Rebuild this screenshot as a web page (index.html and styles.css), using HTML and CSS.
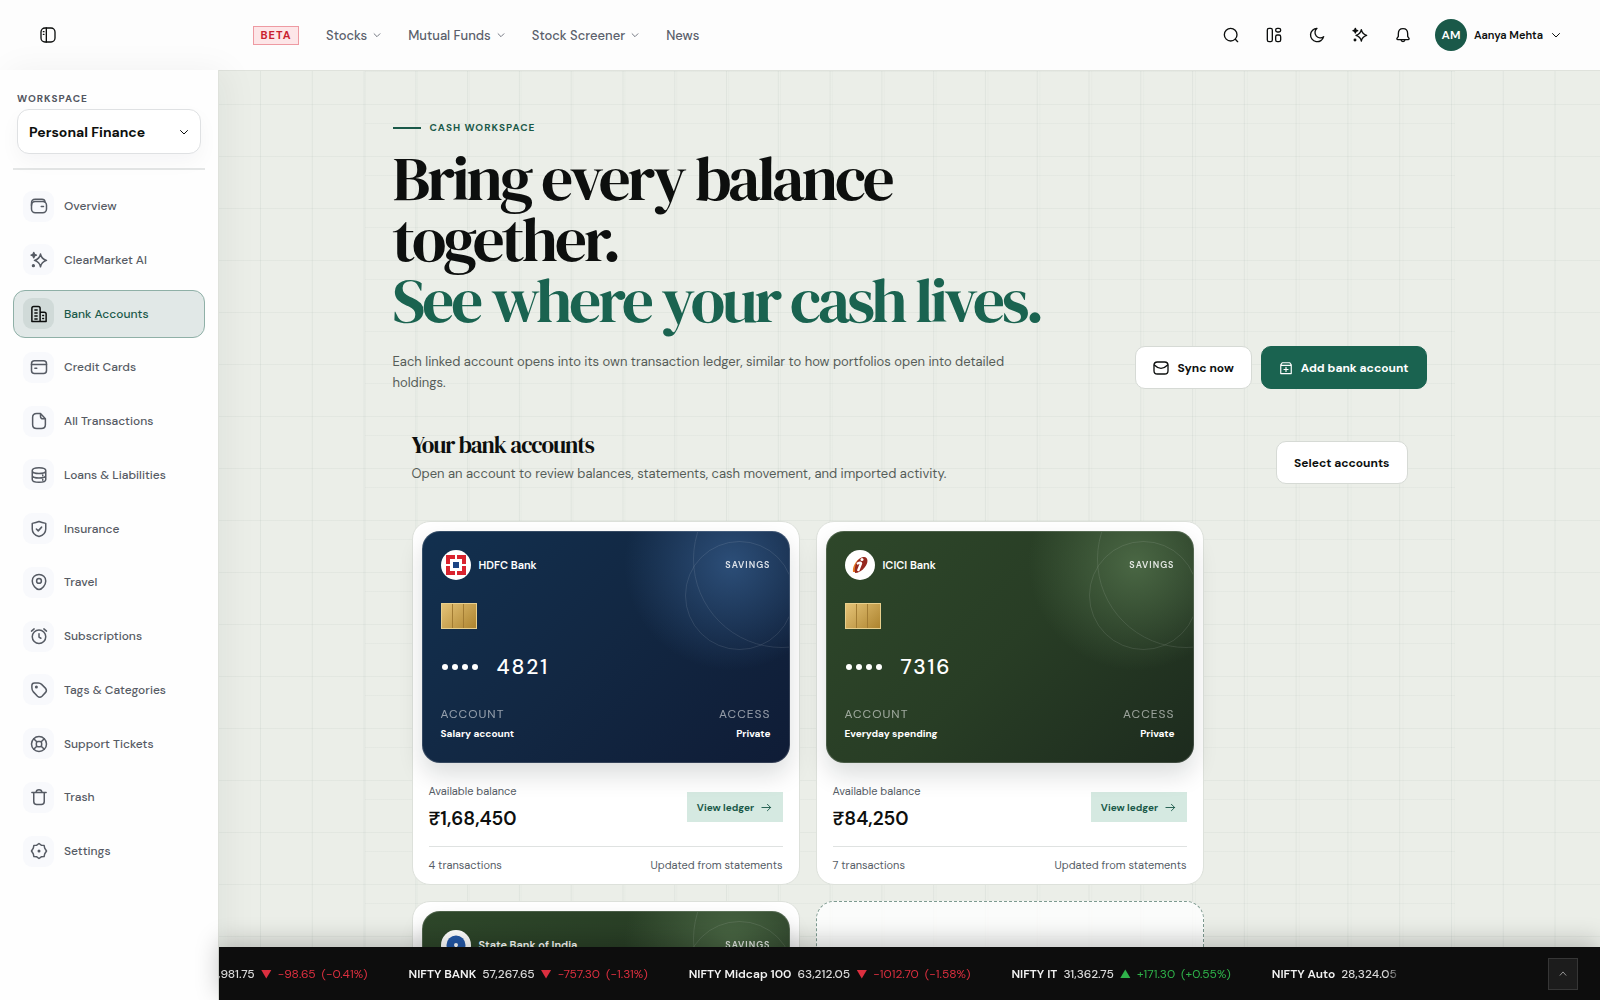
FILE: index.html
```html
<!DOCTYPE html>
<html lang="en">
<head>
    <meta charset="UTF-8">
    <meta name="viewport" content="width=device-width, initial-scale=1.0">
    <title>Bank Accounts - ClearMarket</title>
    <link rel="stylesheet" href="styles.css">
</head>
<body>

    <!-- Icon sprite -->
    <svg class="sprite" aria-hidden="true">
        <symbol id="i-panel" viewBox="0 0 24 24"><rect x="1.500" y="1.500" width="21" height="21" rx="6"/><path d="M9.500 1.500v21M5 7h1M5 11h1"/></symbol>
        <symbol id="i-down" viewBox="0 0 24 24"><path d="M5 9l7 7 7-7"/></symbol>
        <symbol id="i-up" viewBox="0 0 24 24"><path d="M5 15l7-8 7 8"/></symbol>
        <symbol id="i-search" viewBox="0 0 24 24"><circle cx="11.5" cy="11.5" r="9.500"/><path d="M18.5 18.5L22 22"/></symbol>
        <symbol id="i-board" viewBox="0 0 24 24"><rect x="2" y="2" width="7.500" height="20" rx="2.500"/><rect x="14.500" y="2" width="7.500" height="5.500" rx="2.500"/><rect x="14.500" y="12" width="7.500" height="10" rx="2.500"/></symbol>
        <symbol id="i-moon" viewBox="0 0 24 24"><path d="M12 2A10 10 0 1 0 22 14.500a7.500 7.500 0 0 1-10-12.500z"/></symbol>
        <symbol id="i-spark" viewBox="0 0 24 24"><path d="M14 4c1 5 3 7 8 8.500-5 1.500-7 3.500-8 8.500-1-5-3-7-8-8.500 5-1.500 7-3.500 8-8.500z"/><path class="solid" d="M5 2l1 2.500L8.500 5.500 6 6.500 5 9 4 6.500 1.500 5.500 4 4.500z"/><circle class="solid" cx="4.500" cy="19.500" r="1.200"/></symbol>
        <symbol id="i-bell" viewBox="0 0 24 24"><path d="M12 2.500c-4.500 0-7 3-7 7.500v4l-2 3c-.5 1 0 2 1.200 2h15.600c1.200 0 1.700-1 1.200-2l-2-3v-4c0-4.500-2.500-7.500-7-7.500zM9 19.500c.5 3 5.500 3 6 0"/></symbol>
        <symbol id="i-wallet" viewBox="0 0 24 24"><rect x="2" y="6" width="20" height="15" rx="5"/><path d="M2 11V8c0-3 2-5 5-5h9c2.500 0 3.800 1.500 4 3.500M15 12.500h3"/></symbol>
        <symbol id="i-building" viewBox="0 0 24 24"><path d="M2.500 22V4.500c0-1.500.8-2.500 2.500-2.500h6c1.700 0 2.500 1 2.500 2.500V22M13.500 9.500H19c1.700 0 2.500 1 2.500 2.500v10h-19M6.500 6.500h3M6.500 10.500h3M6.500 14.500h3M6.500 18.500h3M17 14h1M17 18h1"/></symbol>
        <symbol id="i-card" viewBox="0 0 24 24"><rect x="2" y="3.500" width="20" height="17" rx="4"/><path d="M2 8.500h20M6.500 13.500H9"/></symbol>
        <symbol id="i-file" viewBox="0 0 24 24"><path d="M14 2H9C5.500 2 3.500 4 3.500 7v10c0 3 2 5 5.500 5h6c3.500 0 5.500-2 5.500-5V9zM14 2v3.500C14 8 15.500 9 17.500 9h3"/></symbol>
        <symbol id="i-data" viewBox="0 0 24 24"><path d="M3 6c0-5 18-5 18 0v12c0 5-18 5-18 0zM3 7c1 4 17 4 18 0M3 13c1 4 17 4 18 0M17 12v1M17 18v1"/></symbol>
        <symbol id="i-shield" viewBox="0 0 24 24"><path d="M12 2c3.500 1.500 6 2 9 2.500V12c0 5-4 8.500-9 10-5-1.500-9-5-9-10V4.500C6 4 8.500 3.500 12 2zM8.500 12l2.500 2.500 4.500-5"/></symbol>
        <symbol id="i-pin" viewBox="0 0 24 24"><path d="M12 2c-5 0-9 3.500-9 8.500C3 16 8 22 12 22s9-6 9-11.500C21 5.500 17 2 12 2z"/><circle cx="12" cy="10.500" r="3.200"/></symbol>
        <symbol id="i-alarm" viewBox="0 0 24 24"><circle cx="12" cy="13" r="9"/><path d="M12 9v4.500l2.500 1.500M2 5.500L5.500 2.500M22 5.500l-3.500-3"/></symbol>
        <symbol id="i-tag" viewBox="0 0 24 24"><path d="M2.500 9V6c0-2.500 1-3.500 3.500-3.500h5c2 0 3 .5 4.500 2l5 5c1.800 2 1.800 4 0 6l-4.500 4.800c-2 1.900-4 1.900-6 0L4.500 14.500c-1.500-1.500-2-3-2-5.500z"/><circle class="solid" cx="8.500" cy="8" r="1"/></symbol>
        <symbol id="i-buoy" viewBox="0 0 24 24"><circle cx="12" cy="12" r="10"/><rect x="8.500" y="8.500" width="7" height="7" rx="2"/><path d="M5 5l4 4M19 5l-4 4M5 19l4-4M19 19l-4-4"/></symbol>
        <symbol id="i-trash" viewBox="0 0 24 24"><path d="M2.500 6h19M5 6v12c0 2.500 1.500 4 4 4h6c2.500 0 4-1.500 4-4V6M8 6c.5-5 7.500-5 8 0"/></symbol>
        <symbol id="i-gear" viewBox="0 0 24 24"><path d="M12 2l3 2.200 3.800.3.800 3.700L22 12l-2.400 3.800-.8 3.700-3.800.3L12 22l-3-2.200-3.800-.3-.8-3.700L2 12l2.400-3.800.8-3.700L9 4.200z"/><circle class="solid" cx="12" cy="12" r="1"/></symbol>
        <symbol id="i-mail" viewBox="0 0 24 24"><rect x="1.500" y="3" width="21" height="18" rx="5"/><path d="M2 7.500c3 3 6.500 5 10 5s7-2 10-5"/></symbol>
        <symbol id="i-add" viewBox="0 0 24 24"><path d="M3 21.500V6.500L5.500 3h13L21 6.500v15zM3 7.500h18M12 11v7M8.500 14.500h7"/></symbol>
        <symbol id="i-right" viewBox="0 0 24 24"><path d="M2 12h19M14 5l7 7-7 7"/></symbol>
    </svg>

    <div class="app">
        <!-- Top bar -->
        <header class="topbar">
            <div class="topbar-left">
                <button class="icon-button" aria-label="Toggle sidebar"><svg class="icon"><use href="#i-panel"/></svg></button>
            </div>
            <span class="beta">BETA</span>
            <nav class="topnav" aria-label="Markets">
                <a href="#">Stocks <svg class="icon caret"><use href="#i-down"/></svg></a>
                <a href="#">Mutual Funds <svg class="icon caret"><use href="#i-down"/></svg></a>
                <a href="#">Stock Screener <svg class="icon caret"><use href="#i-down"/></svg></a>
                <a href="#">News</a>
            </nav>
            <div class="tools">
                <button class="icon-button" aria-label="Search"><svg class="icon"><use href="#i-search"/></svg></button>
                <button class="icon-button" aria-label="Dashboard"><svg class="icon"><use href="#i-board"/></svg></button>
                <button class="icon-button" aria-label="Dark mode"><svg class="icon"><use href="#i-moon"/></svg></button>
                <button class="icon-button" aria-label="Assistant"><svg class="icon"><use href="#i-spark"/></svg></button>
                <button class="icon-button" aria-label="Notifications"><svg class="icon"><use href="#i-bell"/></svg></button>
            </div>
            <button class="profile">
                <span class="avatar">AM</span>
                <span>Aanya Mehta</span>
                <svg class="icon caret"><use href="#i-down"/></svg>
            </button>
        </header>

        <!-- Sidebar -->
        <aside class="sidebar">
            <div class="workspace">
                <label for="workspace">WORKSPACE</label>
                <div class="select-box">
                    <select id="workspace"><option>Personal Finance</option></select>
                    <svg class="icon"><use href="#i-down"/></svg>
                </div>
            </div>
            <nav class="sidenav" aria-label="Workspace">
                <a href="#"><span class="tile"><svg class="icon"><use href="#i-wallet"/></svg></span>Overview</a>
                <a href="#"><span class="tile"><svg class="icon"><use href="#i-spark"/></svg></span>ClearMarket AI</a>
                <a href="#" class="active" aria-current="page"><span class="tile"><svg class="icon"><use href="#i-building"/></svg></span>Bank Accounts</a>
                <a href="#"><span class="tile"><svg class="icon"><use href="#i-card"/></svg></span>Credit Cards</a>
                <a href="#"><span class="tile"><svg class="icon"><use href="#i-file"/></svg></span>All Transactions</a>
                <a href="#"><span class="tile"><svg class="icon"><use href="#i-data"/></svg></span>Loans &amp; Liabilities</a>
                <a href="#"><span class="tile"><svg class="icon"><use href="#i-shield"/></svg></span>Insurance</a>
                <a href="#"><span class="tile"><svg class="icon"><use href="#i-pin"/></svg></span>Travel</a>
                <a href="#"><span class="tile"><svg class="icon"><use href="#i-alarm"/></svg></span>Subscriptions</a>
                <a href="#"><span class="tile"><svg class="icon"><use href="#i-tag"/></svg></span>Tags &amp; Categories</a>
                <a href="#"><span class="tile"><svg class="icon"><use href="#i-buoy"/></svg></span>Support Tickets</a>
                <a href="#"><span class="tile"><svg class="icon"><use href="#i-trash"/></svg></span>Trash</a>
                <a href="#"><span class="tile"><svg class="icon"><use href="#i-gear"/></svg></span>Settings</a>
            </nav>
        </aside>

        <div class="content">
            <main class="scroll">
                <div class="page">
                    <section class="hero">
                        <p class="eyebrow">CASH WORKSPACE</p>
                        <h1>Bring every balance<br>together.<br><span>See where your cash lives.</span></h1>
                        <div class="hero-row">
                            <p class="lead">Each linked account opens into its own transaction ledger, similar to how portfolios open into detailed holdings.</p>
                            <div class="actions">
                                <button class="button"><svg class="icon"><use href="#i-mail"/></svg>Sync now</button>
                                <button class="button primary"><svg class="icon"><use href="#i-add"/></svg>Add bank account</button>
                            </div>
                        </div>
                    </section>

                    <section class="accounts">
                        <div class="accounts-head">
                            <div>
                                <h2>Your bank accounts</h2>
                                <p>Open an account to review balances, statements, cash movement, and imported activity.</p>
                            </div>
                            <button class="button">Select accounts</button>
                        </div>

                        <div class="cards">
                            <article class="account">
                                <div class="bank-card navy">
                                    <div class="card-top">
                                        <svg class="bank-logo" viewBox="0 0 30 30">
                                            <circle cx="15" cy="15" r="15" fill="#fff"/>
                                            <path fill="#d9232e" d="M5 5h20v20H5z"/>
                                            <path fill="#fff" d="M9 9h12v12H9zM14 5h2v20h-2zM5 14h20v2H5z"/>
                                            <path fill="#1c4483" d="M12 12h6v6h-6z"/>
                                        </svg>
                                        <strong>HDFC Bank</strong>
                                        <span class="kind">SAVINGS</span>
                                    </div>
                                    <div class="chip"></div>
                                    <div class="number"><span class="dots"><i></i><i></i><i></i><i></i></span>4821</div>
                                    <dl class="card-info">
                                        <div><dt>ACCOUNT</dt><dd>Salary account</dd></div>
                                        <div><dt>ACCESS</dt><dd>Private</dd></div>
                                    </dl>
                                </div>
                                <div class="balance">
                                    <div>
                                        <p>Available balance</p>
                                        <strong>₹1,68,450</strong>
                                    </div>
                                    <button class="ledger">View ledger <svg class="icon"><use href="#i-right"/></svg></button>
                                </div>
                                <div class="meta"><span>4 transactions</span><span>Updated from statements</span></div>
                            </article>

                            <article class="account">
                                <div class="bank-card green">
                                    <div class="card-top">
                                        <svg class="bank-logo" viewBox="0 0 30 30">
                                            <circle cx="15" cy="15" r="15" fill="#fff"/>
                                            <path fill="#e87822" d="M8 22c-1-5 3-12 8-14l-5 14z"/>
                                            <path fill="#96281f" d="M10 23C9 16 12 8 18 7c5-1 6 5 2 10-3 4-7 6-10 6z"/>
                                            <circle cx="17" cy="9.500" r="1.500" fill="#fff"/>
                                            <path stroke="#fff" stroke-width="2.400" fill="none" d="M12 14c2-1.500 4-2 4-.5L13 21"/>
                                        </svg>
                                        <strong>ICICI Bank</strong>
                                        <span class="kind">SAVINGS</span>
                                    </div>
                                    <div class="chip"></div>
                                    <div class="number"><span class="dots"><i></i><i></i><i></i><i></i></span>7316</div>
                                    <dl class="card-info">
                                        <div><dt>ACCOUNT</dt><dd>Everyday spending</dd></div>
                                        <div><dt>ACCESS</dt><dd>Private</dd></div>
                                    </dl>
                                </div>
                                <div class="balance">
                                    <div>
                                        <p>Available balance</p>
                                        <strong>₹84,250</strong>
                                    </div>
                                    <button class="ledger">View ledger <svg class="icon"><use href="#i-right"/></svg></button>
                                </div>
                                <div class="meta"><span>7 transactions</span><span>Updated from statements</span></div>
                            </article>

                            <article class="account">
                                <div class="bank-card green">
                                    <div class="card-top">
                                        <svg class="bank-logo" viewBox="0 0 30 30">
                                            <circle cx="15" cy="15" r="15" fill="#fff"/>
                                            <circle cx="15" cy="15" r="9.500" fill="#2459a9"/>
                                            <circle cx="15" cy="15" r="2" fill="#fff"/>
                                            <path fill="#fff" d="M14 15h2v10h-2z"/>
                                        </svg>
                                        <strong>State Bank of India</strong>
                                        <span class="kind">SAVINGS</span>
                                    </div>
                                </div>
                            </article>

                            <div class="account add-slot"></div>
                        </div>
                    </section>
                </div>
            </main>

            <!-- Market ticker -->
            <footer class="ticker">
                <div class="ticker-window">
                    <div class="ticker-track">
                        <div class="quote down"><span>23,981.75</span><i>▼</i><em>-98.65</em><em>(-0.41%)</em></div>
                        <div class="quote down"><b>NIFTY BANK</b><span>57,267.65</span><i>▼</i><em>-757.30</em><em>(-1.31%)</em></div>
                        <div class="quote down"><b>NIFTY Midcap 100</b><span>63,212.05</span><i>▼</i><em>-1012.70</em><em>(-1.58%)</em></div>
                        <div class="quote up"><b>NIFTY IT</b><span>31,362.75</span><i>▲</i><em>+171.30</em><em>(+0.55%)</em></div>
                        <div class="quote"><b>NIFTY Auto</b><span>28,324.05</span></div>
                    </div>
                </div>
                <button class="ticker-toggle" aria-label="Expand ticker"><svg class="icon"><use href="#i-up"/></svg></button>
            </footer>
        </div>
    </div>

</body>
</html>
```
FILE: styles.css
```css
* {
    box-sizing: border-box;
}
body {
    margin: 0;
    background-color: #ebeee8;
    color: #0d0f0e;
    font-family: "DM Sans", Inter, "Liberation Sans", sans-serif;
    font-size: 13px;
}
h1, h2, p, dl, dd {
    margin: 0;
}
a {
    color: inherit;
    text-decoration: none;
}
button, select {
    font: inherit;
    color: inherit;
    cursor: pointer;
}
.sprite {
    display: none;
}
.icon {
    width: 16px;
    height: 16px;
    flex: none;
    fill: none;
    stroke: currentColor;
    stroke-width: 2;
    stroke-linecap: round;
    stroke-linejoin: round;
}
.solid {
    fill: currentColor;
}
.app {
    display: grid;
    grid-template-columns: 219px minmax(0, 1fr);
    grid-template-rows: 70px minmax(0, 1fr);
    height: 100vh;
}

/* Top bar */
.topbar {
    grid-column: 1 / -1;
    display: flex;
    align-items: center;
    padding-right: 38px;
    background: #fdfdfd;
}
.topbar-left {
    width: 253px;
    padding-left: 32px;
}
.icon-button {
    display: grid;
    place-items: center;
    width: 32px;
    height: 32px;
    padding: 0;
    border: none;
    background: none;
}
.beta {
    width: 46px;
    line-height: 17px;
    border: 1px solid #ee9aa2;
    background: #fde6e8;
    color: #c91f30;
    font-size: 11px;
    font-weight: 700;
    letter-spacing: 1px;
    text-align: center;
}
.topnav {
    display: flex;
    gap: 26px;
    margin-left: 27px;
    color: #5a5f6b;
    font-weight: 500;
}
.topnav a {
    display: flex;
    align-items: center;
    gap: 5px;
}
.caret {
    width: 10px;
    height: 10px;
}
.tools {
    display: flex;
    gap: 11px;
    margin-left: auto;
}
.profile {
    display: flex;
    align-items: center;
    gap: 7px;
    margin-left: 16px;
    padding: 0;
    border: none;
    background: none;
    font-size: 11px;
    font-weight: 600;
}
.profile .caret {
    width: 12px;
    height: 12px;
}
.avatar {
    width: 32px;
    line-height: 32px;
    border-radius: 50%;
    background: #1a5949;
    color: #fff;
    font-size: 12px;
    text-align: center;
}

/* Sidebar */
.sidebar {
    display: flex;
    flex-direction: column;
    padding: 22px 13px 125px;
    background: #fefefe;
    border-right: 1px solid #dfe2dc;
    box-shadow: 8px 0 32px rgba(20, 40, 30, 0.05);
    z-index: 1;
}
.workspace {
    padding: 0 4px 14px;
    border-bottom: 2px solid #e4e6e6;
}
.workspace label {
    display: block;
    line-height: 14px;
    margin-bottom: 3px;
    color: #52565f;
    font-size: 10px;
    font-weight: 700;
    letter-spacing: 1px;
}
.select-box {
    display: grid;
    align-items: center;
    height: 45px;
    border: 1px solid #dfe1e3;
    border-radius: 12px;
    background: #fff;
    box-shadow: 0 8px 20px rgba(20, 30, 50, 0.04);
}
.select-box > * {
    grid-area: 1 / 1;
}
.select-box select {
    height: 42px;
    padding: 0 11px;
    border: none;
    background: none;
    appearance: none;
    font-size: 14px;
    font-weight: 700;
}
.select-box .icon {
    justify-self: end;
    width: 12px;
    height: 12px;
    margin-right: 10px;
    pointer-events: none;
}
.sidenav {
    flex: 1;
    display: flex;
    flex-direction: column;
    justify-content: space-between;
    padding-top: 12px;
    color: #565b64;
    font-size: 12px;
    font-weight: 500;
}
.sidenav a {
    display: flex;
    align-items: center;
    gap: 10px;
    height: 48px;
    padding: 0 9px;
    border: 1px solid transparent;
    border-radius: 12px;
}
.sidenav .active {
    border-color: #8fb0a7;
    background: #e1e8e7;
    color: #1a5949;
}
.tile {
    display: grid;
    place-items: center;
    width: 31px;
    height: 31px;
    border-radius: 9px;
    background: #f8f9fc;
}
.tile .icon {
    width: 18px;
    height: 18px;
}
.active .tile {
    background: #d0dad8;
    color: #0d0f0e;
}

/* Page */
.content {
    display: flex;
    flex-direction: column;
    min-height: 0;
    border-top: 1px solid #dfe2dc;
}
.scroll {
    flex: 1;
    min-height: 0;
    overflow-y: auto;
    scrollbar-width: none;
    background-image:
        linear-gradient(90deg, rgba(16, 50, 40, 0.05) 1px, transparent 1px),
        linear-gradient(rgba(16, 50, 40, 0.04) 1px, transparent 1px);
    background-size: 3.75% 100%, 100% 52px;
    background-position: 41px 0, 0 33px;
}
.page {
    max-width: 1090px;
    margin: 0 auto;
    padding: 48px 28px 80px;
    background-image:
        linear-gradient(90deg, rgba(16, 50, 40, 0.02) 1px, transparent 1px),
        linear-gradient(rgba(16, 50, 40, 0.03) 1px, transparent 1px);
    background-size: 4.76% 100%, 100% 52px;
}
.eyebrow {
    display: flex;
    align-items: center;
    gap: 9px;
    line-height: 18px;
    color: #1a5949;
    font-size: 10px;
    font-weight: 700;
    letter-spacing: 1px;
}
.eyebrow::before {
    content: "";
    width: 28px;
    height: 2px;
    background: #1a5949;
}
h1, h2 {
    font-family: "DM Serif Display", "Liberation Serif", serif;
    font-weight: 400;
}
h1 {
    margin-top: 11px;
    font-size: 63px;
    line-height: 61px;
    letter-spacing: -3px;
}
h1 span {
    color: #1a6350;
}
.hero-row {
    display: flex;
    align-items: flex-start;
    justify-content: space-between;
    margin-top: 15px;
}
.lead {
    max-width: 640px;
    padding-top: 5px;
    color: #565d58;
    line-height: 21px;
}
.actions {
    display: flex;
    gap: 9px;
}
.button {
    display: flex;
    align-items: center;
    gap: 8px;
    height: 43px;
    padding: 0 17px;
    border: 1px solid #d6dad5;
    border-radius: 10px;
    background: #fff;
    font-size: 12px;
    font-weight: 700;
}
.primary {
    border-color: #1a6350;
    background: #1a6350;
    color: #fff;
}
.primary .icon {
    width: 14px;
    height: 14px;
}

/* Account list */
.accounts {
    padding: 0 19px;
    margin-top: 38px;
}
.accounts-head {
    display: flex;
    align-items: flex-end;
    justify-content: space-between;
    margin-bottom: 37px;
}
h2 {
    font-size: 23px;
    line-height: 28px;
    letter-spacing: -1px;
}
.accounts-head p {
    margin-top: 5px;
    line-height: 20px;
    color: #565d58;
}
.cards {
    display: grid;
    grid-template-columns: repeat(auto-fill, minmax(320px, 388px));
    gap: 16px;
}
.account {
    min-height: 363px;
    padding: 9px;
    border: 1px solid #dde1db;
    border-radius: 18px;
    background: #fff;
}
.add-slot {
    border: 1px dashed #7d9a90;
    background: rgba(255, 255, 255, 0.8);
}
.bank-card {
    position: relative;
    overflow: hidden;
    height: 232px;
    padding: 18px;
    border: 1px solid rgba(255, 255, 255, 0.15);
    border-radius: 18px;
    background-origin: border-box;
    color: #fff;
    box-shadow: 0 12px 24px rgba(10, 20, 20, 0.14);
}
.navy {
    background-image: radial-gradient(circle at 84% 14%, #2c4e78, transparent 29%), linear-gradient(135deg, #12304f, #122742 50%, #0f1c36);
}
.green {
    background-image: radial-gradient(circle at 84% 14%, #4a6744, transparent 29%), linear-gradient(135deg, #2e472a, #283d25 50%, #1d2b1e);
}
/* Decorative rings */
.bank-card::before, .bank-card::after {
    content: "";
    position: absolute;
    border: 1px solid rgba(255, 255, 255, 0.1);
    border-radius: 50%;
}
.bank-card::before {
    top: 9px;
    right: -5px;
    width: 107px;
    height: 107px;
}
.bank-card::after {
    top: -62px;
    right: -82px;
    width: 176px;
    height: 176px;
}
.card-top {
    display: flex;
    align-items: center;
    gap: 8px;
    font-size: 11px;
}
.card-top strong {
    font-weight: 600;
}
.bank-logo {
    width: 30px;
    height: 30px;
}
.kind {
    margin-left: auto;
    font-size: 9px;
    font-weight: 600;
    letter-spacing: 1px;
    opacity: 0.85;
}
.chip {
    width: 36px;
    height: 26px;
    margin-top: 23px;
    border: 1px solid #e8cf8d;
    background:
        linear-gradient(90deg, transparent 10px, #a27c33 10px 11px, transparent 11px 21px, #a27c33 21px 22px, transparent 22px),
        linear-gradient(135deg, #e5c377, #ad842f);
}
.number {
    display: flex;
    align-items: center;
    gap: 19px;
    margin-top: 25px;
    line-height: 26px;
    font-size: 21px;
    font-weight: 500;
    letter-spacing: 2px;
}
.dots {
    display: flex;
    gap: 4px;
    padding-left: 1px;
}
.dots i {
    width: 6px;
    height: 6px;
    border-radius: 50%;
    background: #fff;
}
.card-info {
    display: flex;
    justify-content: space-between;
    margin-top: 24px;
}
.card-info div:last-child {
    text-align: right;
}
.card-info dt {
    line-height: 20px;
    font-size: 12px;
    letter-spacing: 1px;
    opacity: 0.55;
}
.card-info dd {
    line-height: 20px;
    font-size: 10px;
    font-weight: 700;
}
.balance {
    display: flex;
    align-items: center;
    justify-content: space-between;
    margin: 0 7px;
    padding: 18px 0 13px;
    border-bottom: 1px solid #dfe2e1;
}
.balance p {
    line-height: 20px;
    color: #565d66;
    font-size: 11px;
}
.balance strong {
    display: block;
    margin-top: 4px;
    line-height: 28px;
    font-size: 19px;
    font-weight: 600;
}
.ledger {
    display: flex;
    align-items: center;
    justify-content: center;
    gap: 7px;
    width: 96px;
    height: 30px;
    padding: 0;
    border: none;
    background: #d5e9e1;
    color: #1a5949;
    font-size: 10px;
    font-weight: 700;
    white-space: nowrap;
}
.ledger .icon {
    width: 11px;
    height: 11px;
}
.meta {
    display: flex;
    justify-content: space-between;
    margin: 9px 7px 0;
    line-height: 19px;
    color: #565d66;
    font-size: 11px;
}

/* Ticker */
.ticker {
    display: flex;
    align-items: center;
    justify-content: space-between;
    height: 53px;
    padding-right: 22px;
    background: #0d0d0d;
    color: #d8d8d8;
    box-shadow: 0 -6px 24px rgba(0, 0, 0, 0.22);
    font-size: 12px;
    z-index: 1;
}
.ticker-window {
    flex: 1;
    margin-right: 146px;
    overflow: hidden;
    mask-image: linear-gradient(90deg, #000 calc(100% - 16px), transparent);
}
.ticker-track {
    display: flex;
    gap: 41px;
    margin-left: -15px;
    white-space: nowrap;
}
.quote {
    display: flex;
    align-items: center;
    gap: 6px;
    line-height: 20px;
    font-weight: 500;
}
.quote b {
    color: #f2f2f2;
    font-weight: 600;
}
.quote i, .quote em {
    font-style: normal;
    font-weight: 400;
}
.quote i {
    font-size: 11px;
}
.down i, .down em {
    color: #dc2f3f;
}
.up i, .up em {
    color: #2fb34a;
}
.ticker-toggle {
    display: grid;
    place-items: center;
    width: 30px;
    height: 32px;
    padding: 0;
    border: 1px solid #363636;
    background: #1c1c1c;
    color: #a8a8a8;
}
.ticker-toggle .icon {
    width: 10px;
    height: 10px;
}
```
